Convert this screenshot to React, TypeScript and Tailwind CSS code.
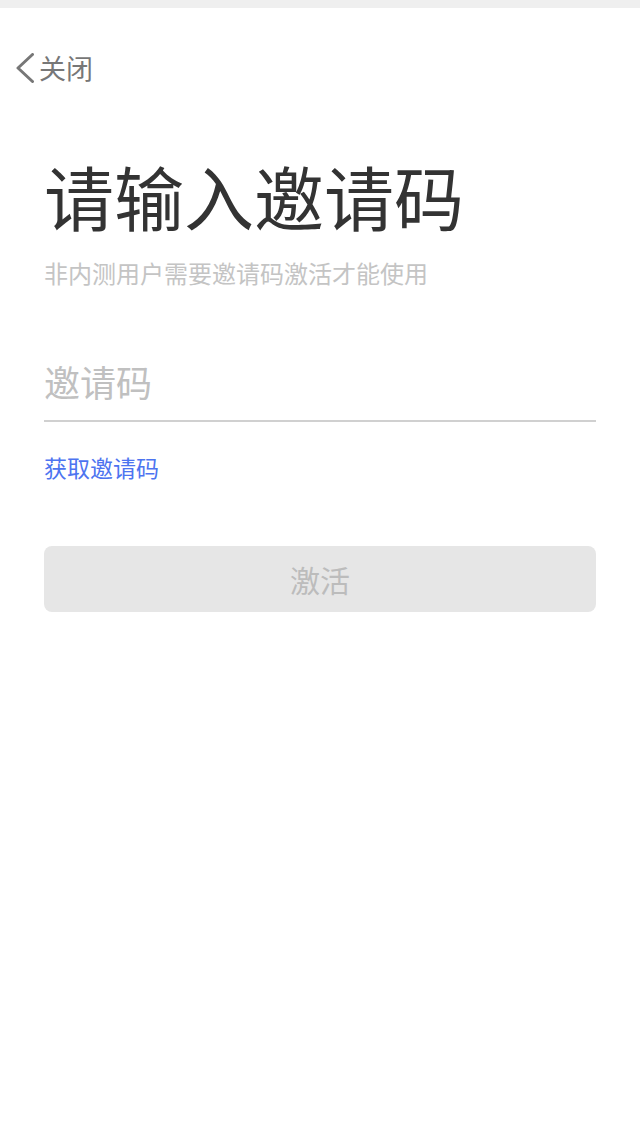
import React from "react";

export default function App() {
  return (
    <div className="min-h-[1138px] w-full bg-white font-['Noto_Sans_CJK_SC','Noto_Sans',sans-serif]">
      <div className="h-[8px] bg-[#efefef]" />
      <div className="mt-[45px] flex h-[30px] items-center pl-[15px]">
        <svg width="19" height="30" viewBox="0 0 19 30" fill="none">
          <path d="M17.5 1.5 L3 15 L17.5 28.5" stroke="#777777" strokeWidth="3" strokeLinecap="round" strokeLinejoin="round" />
        </svg>
        <span className="ml-[5px] text-[27px] leading-[30px] text-[#777777]">关闭</span>
      </div>
      <div className="px-[44px]">
        <h1 className="mt-[71px] text-[70px] leading-[84px] font-normal text-[#333333]">请输入邀请码</h1>
        <p className="mt-[18px] text-[24px] leading-[34px] text-[#c4c4c4]">非内测用户需要邀请码激活才能使用</p>
        <div className="mt-[65px] border-b-2 border-[#d0d0d0] pb-[13px]">
          <input
            className="h-[52px] w-full bg-transparent text-[36px] leading-[52px] text-[#333333] outline-none placeholder:text-[#c0c0c0]"
            placeholder="邀请码"
          />
        </div>
        <div className="mt-[29px] text-[23px] leading-[32px] text-[#4d74f0]">获取邀请码</div>
        <button className="mt-[63px] flex h-[66px] w-full items-center justify-center rounded-[8px] bg-[#e6e6e6] text-[30px] text-[#bcbcbc]">
          激活
        </button>
      </div>
    </div>
  );
}
